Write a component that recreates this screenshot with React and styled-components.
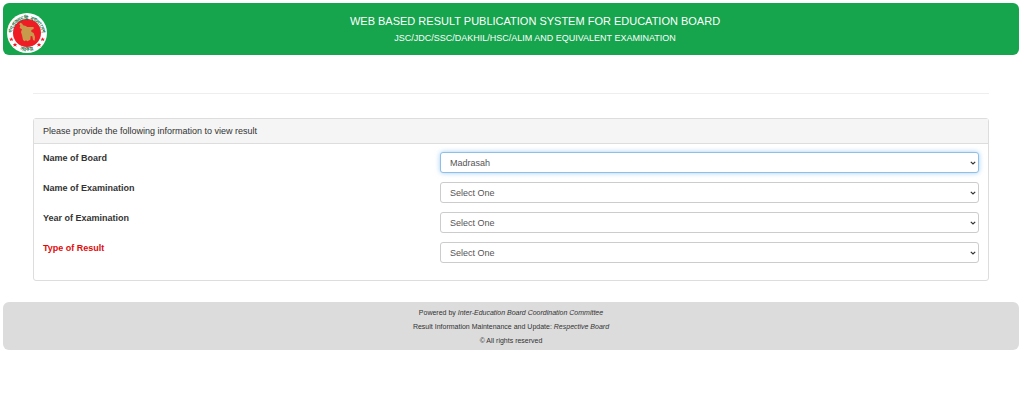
import React, { useState } from 'react'
import styled, { createGlobalStyle } from 'styled-components'

const GlobalStyle = createGlobalStyle`
  * {
    box-sizing: border-box;
  }
  body {
    margin: 0;
    padding: 3px 5px 0 3px;
    background: #fff;
    color: #333;
    font-family: "Liberation Sans", Arial, sans-serif;
    font-size: 9px;
    line-height: 12px;
  }
`

const Header = styled.header`
  display: grid;
  grid-template-columns: 40px 1fr;
  align-items: end;
  padding: 10px 0 2px 4px;
  background: #16a44d;
  border-radius: 6px;
  color: #fff;
`

const Emblem = styled.svg`
  display: block;
  width: 40px;
  height: 40px;
`

const Titles = styled.div`
  align-self: start;
  text-align: center;
  padding-left: 4px;
`

const Title = styled.h1`
  margin: 0;
  font-size: 11px;
  font-weight: 400;
  line-height: 16px;
`

const Subtitle = styled.p`
  margin: 0;
  font-size: 9px;
  line-height: 18px;
`

const Container = styled.main`
  padding: 38px 30px 0;
`

const Divider = styled.hr`
  margin: 0 0 24px;
  border: 0;
  border-top: 1px solid #eee;
`

const Panel = styled.section`
  border: 1px solid #ddd;
  border-radius: 3px;
`

const PanelHeading = styled.h2`
  margin: 0;
  padding: 6px 9px;
  background: #f5f5f5;
  border-bottom: 1px solid #ddd;
  font-size: 9px;
  font-weight: 400;
  line-height: 12px;
`

const Form = styled.form`
  display: flex;
  flex-direction: column;
  gap: 9px;
  padding: 8px 9px 17px;
`

const Row = styled.div`
  display: grid;
  grid-template-columns: 5fr 7fr;
  column-gap: 12px;
`

const Label = styled.label`
  color: ${props => props.$required ? '#e10a0a' : '#333'};
  font-weight: 700;
`

const SelectWrapper = styled.div`
  display: grid;
  align-items: center;
  > * {
    grid-area: 1 / 1;
  }
`

const Arrow = styled.svg`
  justify-self: end;
  width: 6px;
  height: 4px;
  margin-right: 3px;
  pointer-events: none;
`

const Select = styled.select`
  appearance: none;
  width: 100%;
  height: 21px;
  padding: 0 9px;
  background: #fff;
  border: 1px solid #ccc;
  border-radius: 3px;
  color: #555;
  font-family: inherit;
  font-size: 9px;
  outline: 0;
  &:focus {
    border-color: #8fbfe6;
    box-shadow: 0 0 5px rgba(102, 175, 233, 0.6);
  }
`

const Footer = styled.footer`
  margin-top: 21px;
  padding: 4px 0 2px;
  background: #dcdcdc;
  border-radius: 6px;
  text-align: center;
  font-size: 7px;
  line-height: 14px;
  p {
    margin: 0;
  }
`

const fields = [
  { id: 'board', label: 'Name of Board', options: ['Select One', 'Madrasah'], value: 'Madrasah' },
  { id: 'exam', label: 'Name of Examination', options: ['Select One'], value: 'Select One' },
  { id: 'year', label: 'Year of Examination', options: ['Select One'], value: 'Select One' },
  { id: 'type', label: 'Type of Result', options: ['Select One'], value: 'Select One', required: true },
]

const Logo = () => (
  <Emblem viewBox="0 0 120 120" role="img" aria-label="Government emblem">
    <defs>
      <path id="ringTop" d="M 15 66 A 45 45 0 1 1 105 66" />
      <path id="ringBottom" d="M 16 91 A 54 54 0 0 0 104 91" />
    </defs>
    <circle cx="60" cy="60" r="60" fill="#fff" />
    <circle cx="60" cy="60" r="42" fill="#ee1c25" />
    <path
      d="M40 29 L46 32 L48 37 L57 39 L60 42 L80 42 L80 48 L73 51 L73 56 L80 60 L84 72 L83 83 L78 81 L76 70 L71 69 L70 80 L61 85 L57 82 L53 85 L48 81 L45 67 L42 57 L45 49 L38 45 L40 38 L37 34 Z"
      fill="#c79b4b"
    />
    <g fill="#167044" fontSize="16" fontWeight="700" textAnchor="middle">
      <text><textPath href="#ringTop" startOffset="50%">গণপ্রজাতন্ত্রী বাংলাদেশ</textPath></text>
      <text><textPath href="#ringBottom" startOffset="50%">সরকার</textPath></text>
    </g>
    <g fill="#ee1c25">
      <path id="star" d="M13 73 L15 77 L20 77 L16 80 L18 85 L13 82 L8 85 L10 80 L6 77 L11 77 Z" />
      <use href="#star" x="11" y="16" />
      <use href="#star" x="94" />
      <use href="#star" x="83" y="16" />
    </g>
  </Emblem>
)

const App = () => {
  const [values, setValues] = useState(
    Object.fromEntries(fields.map(field => [field.id, field.value]))
  )

  const handleChange = e => {
    setValues({ ...values, [e.target.name]: e.target.value })
  }

  return (
    <>
      <GlobalStyle />
      <Header>
        <Logo />
        <Titles>
          <Title>WEB BASED RESULT PUBLICATION SYSTEM FOR EDUCATION BOARD</Title>
          <Subtitle>JSC/JDC/SSC/DAKHIL/HSC/ALIM AND EQUIVALENT EXAMINATION</Subtitle>
        </Titles>
      </Header>
      <Container>
        <Divider />
        <Panel>
          <PanelHeading>Please provide the following information to view result</PanelHeading>
          <Form>
            {fields.map((field, index) => (
              <Row key={field.id}>
                <Label htmlFor={field.id} $required={field.required}>{field.label}</Label>
                <SelectWrapper>
                  <Select
                    id={field.id}
                    name={field.id}
                    value={values[field.id]}
                    onChange={handleChange}
                    autoFocus={index === 0}
                  >
                    {field.options.map(option => <option key={option}>{option}</option>)}
                  </Select>
                  <Arrow viewBox="0 0 6 4" aria-hidden="true">
                    <path d="M0.8 0.8 L3 3 L5.2 0.8" fill="none" stroke="#333" strokeWidth="1.2" />
                  </Arrow>
                </SelectWrapper>
              </Row>
            ))}
          </Form>
        </Panel>
      </Container>
      <Footer>
        <p>Powered by <em>Inter-Education Board Coordination Committee</em></p>
        <p>Result Information Maintenance and Update: <em>Respective Board</em></p>
        <p>© All rights reserved</p>
      </Footer>
    </>
  )
}

export default App
